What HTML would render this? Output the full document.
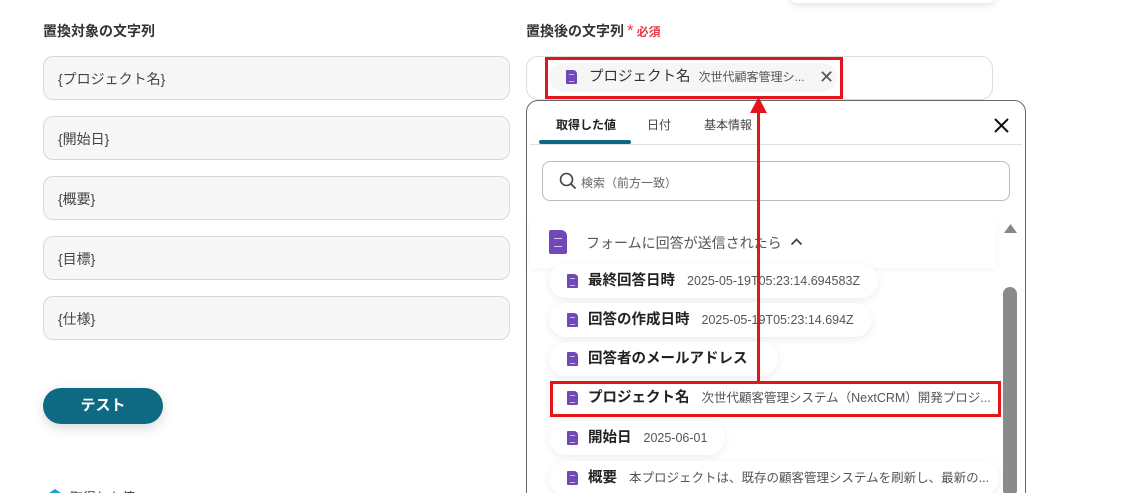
<!DOCTYPE html>
<html><head><meta charset="utf-8"><style>
*{box-sizing:border-box;margin:0;padding:0}
html,body{width:1122px;height:493px;overflow:hidden}
body{background:#fff;font-family:"Liberation Sans","Noto Sans CJK JP",sans-serif;position:relative;color:#333}
.a{position:absolute}
.lbl{font-size:14px;font-weight:bold;color:#333}
.inp{position:absolute;left:43px;width:467px;height:44px;border:1px solid #d8d8d8;border-radius:10px;background:#f7f7f7;font-size:14px;padding:12px 0 0 14px;color:#444}
.doc{display:inline-block;width:11px;height:14px;background:#7248b9;border-radius:1px 4px 1px 1px;position:relative;vertical-align:middle}
.doc:after{content:"";position:absolute;left:3px;top:4px;width:5px;height:6px;border-top:1px solid #c9b6ea;border-bottom:1px solid #c9b6ea}
.pill{position:absolute;left:549px;height:34px;background:#fff;border-radius:17px;box-shadow:0 2px 8px rgba(0,0,0,.08);font-size:14.5px;padding:0 18px;line-height:34px;white-space:nowrap}
.pill b{color:#222;margin-left:10px;margin-right:12px}
.pill span{font-size:12.5px;color:#555}
</style></head><body>
<div class="a" style="left:790px;top:-10px;width:205px;height:13px;border-radius:8px;box-shadow:0 2px 8px rgba(0,0,0,.12);background:#fff"></div>
<div class="a lbl" style="left:43px;top:21px">置換対象の文字列</div>
<div class="inp" style="top:56px">{プロジェクト名}</div>
<div class="inp" style="top:116px">{開始日}</div>
<div class="inp" style="top:176px">{概要}</div>
<div class="inp" style="top:236px">{目標}</div>
<div class="inp" style="top:296px">{仕様}</div>
<div class="a" style="left:43px;top:388px;width:120px;height:36px;background:#0d6a82;border-radius:18px;color:#fff;font-weight:bold;font-size:15px;text-align:center;line-height:36px;box-shadow:0 4px 12px rgba(0,0,0,.15)">テスト</div>
<div class="a" style="left:49px;top:489px;width:12px;height:8px;background:#1aa3d8;clip-path:polygon(50% 0,100% 50%,0 50%)"></div>
<div class="a" style="left:70px;top:487px;font-size:13px;color:#333">取得した値</div>

<div class="a lbl" style="left:526px;top:21px">置換後の文字列<span style="color:#e6394a;font-weight:normal;margin-left:3px;font-size:17px">*</span><span style="color:#e6394a;font-size:12px;margin-left:3px">必須</span></div>
<div class="a" style="left:526px;top:56px;width:467px;height:44px;border:1px solid #ddd;border-radius:12px;background:#fff"></div>
<div class="a" style="left:549px;top:63px;width:288px;height:29px;border-radius:15px;background:#f6f6f6;font-size:14.5px;line-height:29px;padding-left:17px;white-space:nowrap"><span class="doc"></span><span style="margin-left:12px;color:#333">プロジェクト名</span><span style="font-size:12px;color:#555;margin-left:8px">次世代顧客管理シ...</span><span style="position:absolute;left:270px;top:0;font-size:18px;color:#555">✕</span></div>
<div class="a" style="left:545px;top:57px;width:298px;height:42px;border:3px solid #e3141c"></div>

<div class="a" style="left:526px;top:100px;width:500px;height:400px;border:1px solid #666;border-radius:12px 12px 0 0;background:#fff"></div>
<div class="a" style="left:556px;top:116px;font-size:12px;font-weight:bold;color:#222">取得した値</div>
<div class="a" style="left:647px;top:116px;font-size:12px;color:#444">日付</div>
<div class="a" style="left:704px;top:116px;font-size:12px;color:#444">基本情報</div>
<div class="a" style="left:539px;top:140px;width:92px;height:4px;background:#0d6a82;border-radius:2px"></div>
<div class="a" style="left:530px;top:144px;width:492px;height:1px;background:#e0e0e0"></div>
<svg class="a" style="left:993px;top:117px" width="17" height="17"><path d="M2 2L15 15M15 2L2 15" stroke="#111" stroke-width="2"/></svg>
<div class="a" style="left:542px;top:161px;width:468px;height:40px;border:1px solid #bbb;border-radius:8px"></div>
<svg class="a" style="left:559px;top:172px" width="18" height="18"><circle cx="7.5" cy="7.5" r="6" fill="none" stroke="#444" stroke-width="1.6"/><path d="M12 12L16.5 16.5" stroke="#444" stroke-width="1.8"/></svg>
<div class="a" style="left:581px;top:174px;font-size:12px;color:#666">検索（前方一致）</div>

<div class="a" style="left:530px;top:218px;width:466px;height:50px;background:#fff;box-shadow:0 2px 6px rgba(0,0,0,.04)"></div>
<div class="a" style="left:549px;top:230px;width:18px;height:24px;background:#7248b9;border-radius:2px 6px 2px 2px"><div style="position:absolute;left:5px;top:8px;width:8px;height:9px;border-top:1.5px solid #d8cbf0;border-bottom:1.5px solid #d8cbf0"></div></div>
<div class="a" style="left:586px;top:233px;font-size:14px;color:#555">フォームに回答が送信されたら</div>
<svg class="a" style="left:790px;top:237px" width="13" height="9"><path d="M1.5 7.5L6.5 2.5L11.5 7.5" fill="none" stroke="#444" stroke-width="1.8"/></svg>
<svg class="a" style="left:1003px;top:223px" width="15" height="11"><path d="M7.5 1L14 10H1Z" fill="#888"/></svg>
<div class="a" style="left:1003px;top:287px;width:14px;height:210px;background:#8a8a8a;border-radius:7px"></div>

<div class="pill" style="top:264px"><span class="doc"></span><b>最終回答日時</b><span>2025-05-19T05:23:14.694583Z</span></div>
<div class="pill" style="top:303px"><span class="doc"></span><b>回答の作成日時</b><span>2025-05-19T05:23:14.694Z</span></div>
<div class="pill" style="top:342px"><span class="doc"></span><b>回答者のメールアドレス</b></div>
<div class="pill" style="top:381px;width:450px;border-radius:0"><span class="doc"></span><b>プロジェクト名</b><span>次世代顧客管理システム（NextCRM）開発プロジ...</span></div>
<div class="a" style="left:550px;top:381px;width:451px;height:36px;border:3px solid #e3141c"></div>
<div class="pill" style="top:421px"><span class="doc"></span><b>開始日</b><span>2025-06-01</span></div>
<div class="pill" style="top:461px;width:450px"><span class="doc"></span><b>概要</b><span>本プロジェクトは、既存の顧客管理システムを刷新し、最新の...</span></div>

<div class="a" style="left:757px;top:110px;width:3px;height:271px;background:#e3141c"></div>
<svg class="a" style="left:750px;top:97px" width="17" height="16"><path d="M8.5 0L17 16H0Z" fill="#e3141c"/></svg>
</body></html>
